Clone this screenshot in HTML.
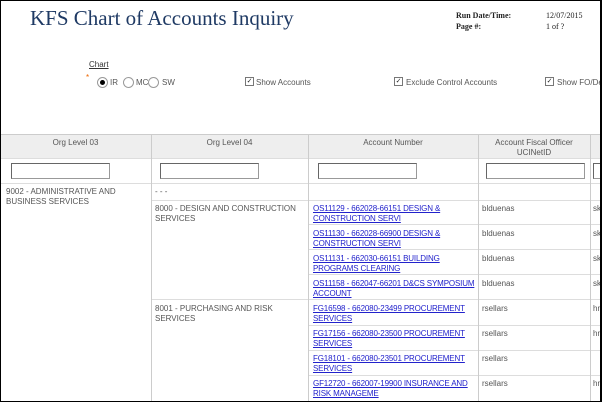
<!DOCTYPE html>
<html><head><style>
*{margin:0;padding:0;box-sizing:border-box}
body{width:602px;height:402px;overflow:hidden;background:#fff;font-family:"Liberation Sans",Arial,sans-serif;position:relative}
.a{position:absolute;white-space:nowrap}
.f{font-family:"Liberation Serif",serif}
.s{font-size:8px;color:#555;line-height:10px}
.l{font-size:8px;color:#22c;text-decoration:underline;line-height:10px;letter-spacing:-0.15px}
.hl{position:absolute;height:1px;background:#ddd}
.vl{position:absolute;width:1px;background:#ddd}
.in{position:absolute;height:16px;border:1px solid #999;border-top-color:#666;border-left-color:#666;background:#fff}
.cb{position:absolute;width:9px;height:9px;border:1px solid #777;background:#fff;font-size:7px;line-height:7px;text-align:center;color:#222}
.rd{position:absolute;width:11px;height:11px;border-radius:50%;border:1px solid #999;background:#fff}
</style></head><body>
<div class="a" style="inset:0;border:1px solid #000;border-right:2px solid #000;z-index:10;pointer-events:none"></div>
<div class="a f" style="left:30px;top:6px;font-size:21px;color:#1f3a64">KFS Chart of Accounts Inquiry</div>
<div class="a f" style="left:456px;top:10px;font-size:8px;font-weight:bold;line-height:11px;color:#222">Run Date/Time:<br>Page #:</div>
<div class="a f" style="left:546px;top:10px;font-size:8px;line-height:11px;color:#222">12/07/2015<br>1 of ?</div>
<div class="a" style="left:89px;top:60px;font-size:8px;color:#333;text-decoration:underline">Chart</div>
<div class="a" style="left:86px;top:73px;font-size:8px;color:#e60">*</div>
<div class="rd" style="left:97px;top:77px"><div class="a" style="left:2px;top:2px;width:5px;height:5px;border-radius:50%;background:#000"></div></div>
<div class="a s" style="left:110px;top:78px">IR</div>
<div class="rd" style="left:123px;top:77px"></div>
<div class="a s" style="left:136px;top:78px">MC</div>
<div class="rd" style="left:148px;top:77px"></div>
<div class="a s" style="left:162px;top:78px">SW</div>
<div class="cb" style="left:245px;top:77px">✓</div>
<div class="a s" style="left:256px;top:78px">Show Accounts</div>
<div class="cb" style="left:394px;top:77px">✓</div>
<div class="a s" style="left:406px;top:78px">Exclude Control Accounts</div>
<div class="cb" style="left:545px;top:77px">✓</div>
<div class="a s" style="left:557px;top:78px">Show FO/Del</div>
<div class="a" style="left:0;top:134px;width:602px;height:24px;background:#eee;border-top:1px solid #ccc"></div>
<div class="hl" style="left:0;top:158px;width:602px"></div>
<div class="hl" style="left:0;top:183px;width:602px"></div>
<div class="hl" style="left:151px;top:200px;width:451px"></div>
<div class="hl" style="left:308px;top:224px;width:294px"></div>
<div class="hl" style="left:308px;top:249px;width:294px"></div>
<div class="hl" style="left:308px;top:274px;width:294px"></div>
<div class="hl" style="left:151px;top:299px;width:451px"></div>
<div class="hl" style="left:308px;top:325px;width:294px"></div>
<div class="hl" style="left:308px;top:350px;width:294px"></div>
<div class="hl" style="left:308px;top:375px;width:294px"></div>
<div class="vl" style="left:151px;top:134px;height:268px;background:#ccc"></div>
<div class="vl" style="left:308px;top:134px;height:268px;background:#ccc"></div>
<div class="vl" style="left:478px;top:134px;height:268px;background:#ccc"></div>
<div class="vl" style="left:590px;top:134px;height:268px;background:#ccc"></div>
<div class="a s" style="left:0;width:151px;top:138px;text-align:center">Org Level 03</div>
<div class="a s" style="left:151px;width:157px;top:138px;text-align:center">Org Level 04</div>
<div class="a s" style="left:308px;width:170px;top:138px;text-align:center">Account Number</div>
<div class="a s" style="left:478px;width:112px;top:138px;text-align:center">Account Fiscal Officer<br>UCINetID</div>
<div class="in" style="left:11px;top:163px;width:99px"></div>
<div class="in" style="left:160px;top:163px;width:99px"></div>
<div class="in" style="left:318px;top:163px;width:99px"></div>
<div class="in" style="left:486px;top:163px;width:99px"></div>
<div class="in" style="left:593px;top:163px;width:20px"></div>
<div class="a s" style="left:6px;top:187px">9002 - ADMINISTRATIVE AND<br>BUSINESS SERVICES</div>
<div class="a s" style="left:155px;top:187px">- - -</div>
<div class="a s" style="left:155px;top:204px">8000 - DESIGN AND CONSTRUCTION<br>SERVICES</div>
<div class="a s" style="left:155px;top:304px">8001 - PURCHASING AND RISK<br>SERVICES</div>
<div class="a l" style="left:313px;top:204px">OS11129 - 662028-66151 DESIGN &amp;<br>CONSTRUCTION SERVI</div>
<div class="a l" style="left:313px;top:229px">OS11130 - 662028-66900 DESIGN &amp;<br>CONSTRUCTION SERVI</div>
<div class="a l" style="left:313px;top:254px">OS11131 - 662030-66151 BUILDING<br>PROGRAMS CLEARING</div>
<div class="a l" style="left:313px;top:279px">OS11158 - 662047-66201 D&amp;CS SYMPOSIUM<br>ACCOUNT</div>
<div class="a l" style="left:313px;top:304px">FG16598 - 662080-23499 PROCUREMENT<br>SERVICES</div>
<div class="a l" style="left:313px;top:329px">FG17156 - 662080-23500 PROCUREMENT<br>SERVICES</div>
<div class="a l" style="left:313px;top:354px">FG18101 - 662080-23501 PROCUREMENT<br>SERVICES</div>
<div class="a l" style="left:313px;top:379px">GF12720 - 662007-19900 INSURANCE AND<br>RISK MANAGEME</div>
<div class="a s" style="left:482px;top:204px">blduenas</div>
<div class="a s" style="left:482px;top:229px">blduenas</div>
<div class="a s" style="left:482px;top:254px">blduenas</div>
<div class="a s" style="left:482px;top:279px">blduenas</div>
<div class="a s" style="left:482px;top:304px">rsellars</div>
<div class="a s" style="left:482px;top:329px">rsellars</div>
<div class="a s" style="left:482px;top:354px">rsellars</div>
<div class="a s" style="left:482px;top:379px">rsellars</div>
<div class="a s" style="left:593px;top:204px">sk</div>
<div class="a s" style="left:593px;top:229px">sk</div>
<div class="a s" style="left:593px;top:254px">sk</div>
<div class="a s" style="left:593px;top:279px">sk</div>
<div class="a s" style="left:593px;top:304px">hn</div>
<div class="a s" style="left:593px;top:329px">hn</div>
<div class="a s" style="left:593px;top:379px">hn</div>
</body></html>
